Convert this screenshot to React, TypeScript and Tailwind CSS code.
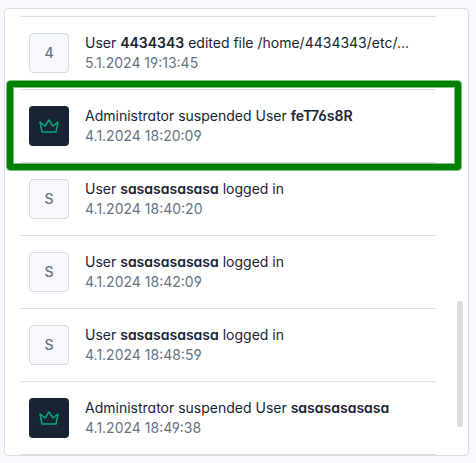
import React from "react";

type Entry = {
  badge: string | null;
  before: string;
  name: string;
  after?: string;
  time: string;
};

const entries: Entry[] = [
  { badge: "4", before: "User ", name: "4434343", after: " edited file /home/4434343/etc/...", time: "5.1.2024 19:13:45" },
  { badge: null, before: "Administrator suspended User ", name: "feT76s8R", time: "4.1.2024 18:20:09" },
  { badge: "S", before: "User ", name: "sasasasasasa", after: " logged in", time: "4.1.2024 18:40:20" },
  { badge: "S", before: "User ", name: "sasasasasasa", after: " logged in", time: "4.1.2024 18:42:09" },
  { badge: "S", before: "User ", name: "sasasasasasa", after: " logged in", time: "4.1.2024 18:48:59" },
  { badge: null, before: "Administrator suspended User ", name: "sasasasasasa", time: "4.1.2024 18:49:38" },
];

function Crown() {
  return (
    <svg
      width="24"
      height="24"
      viewBox="0 0 24 24"
      fill="none"
      stroke="#0ca678"
      strokeWidth="1.5"
      strokeLinecap="round"
      strokeLinejoin="round"
    >
      <path d="M12 6l4 6 5-4-2 10H5L3 8l5 4z" />
    </svg>
  );
}

function Avatar({ badge }: { badge: string | null }) {
  if (badge === null) {
    return (
      <div className="flex size-10 shrink-0 items-center justify-center rounded-[4px] bg-[#182433]">
        <Crown />
      </div>
    );
  }
  return (
    <div className="flex size-10 shrink-0 items-center justify-center rounded-[4px] border border-[#d5dbe3] bg-[#f6f8fb] text-sm font-medium text-[#667382]">
      {badge}
    </div>
  );
}

function Row({ entry }: { entry: Entry }) {
  return (
    <li className="flex h-[73px] items-center gap-4 border-b border-[#dadde2] px-2">
      <Avatar badge={entry.badge} />
      <div className="min-w-0 flex-1 text-sm leading-5 whitespace-nowrap">
        <div className="text-[#182433]">
          {entry.before}
          <strong className="font-semibold">{entry.name}</strong>
          {entry.after}
        </div>
        <div className="text-[#667382]">{entry.time}</div>
      </div>
    </li>
  );
}

export default function App() {
  return (
    <div className="relative h-[463px] w-[476px] overflow-hidden bg-[#f6f8fb] pt-2 pl-1 font-['Inter',sans-serif] [font-feature-settings:'cv03','cv04','cv11']">
      <div className="flex h-[448px] w-[465px] justify-between overflow-hidden rounded-[4px] border border-[#dadfe6] bg-white pt-[7px] pr-[5px] pl-4">
        <ul className="h-[439px] w-[415px] shrink-0 border-t border-[#dadde2]">
          {entries.map((entry) => (
            <Row key={entry.time} entry={entry} />
          ))}
        </ul>
        <div className="mt-[285px] h-[126px] w-1.5 rounded-full bg-[#dadcde]" />
      </div>
      <div className="absolute top-[80px] left-[6px] h-[91px] w-[456px] rounded-[4px] border border-[#7fbf7f]">
        <div className="h-full w-full rounded-[3px] border-[6px] border-[#008000]">
          <div className="h-full w-full border border-[#7fbf7f]" />
        </div>
      </div>
    </div>
  );
}
